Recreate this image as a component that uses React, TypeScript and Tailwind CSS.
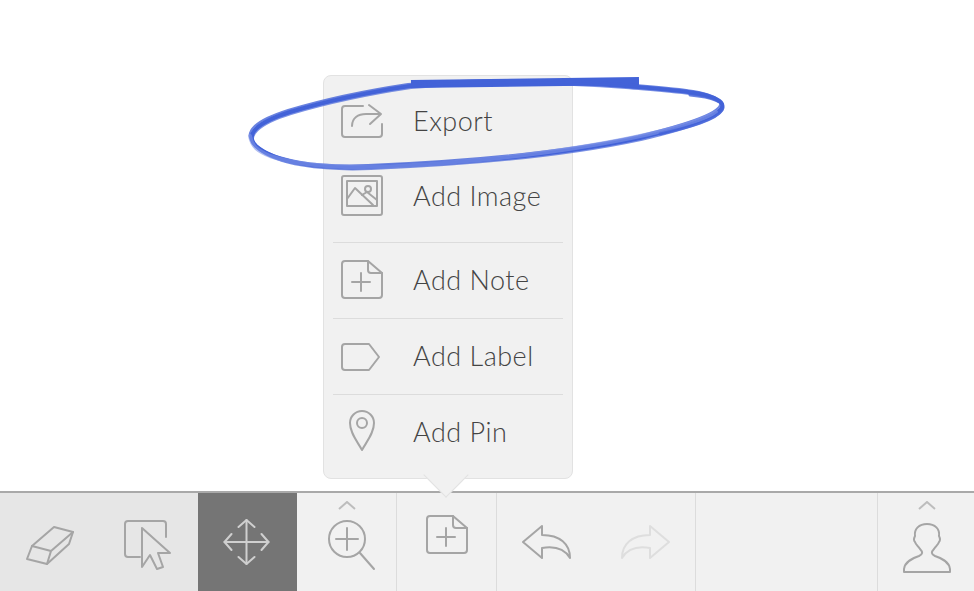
const iconCls = 'fill-none stroke-[#a5a5a5] stroke-2 overflow-visible';

function ExportIcon() {
  return (
    <svg width="44" height="44" viewBox="0 0 44 44" className={iconCls} strokeLinecap="round" strokeLinejoin="round">
      <path d="M23 6H5a3 3 0 0 0-3 3V34a3 3 0 0 0 3 3H39a3 3 0 0 0 3-3V24" />
      <path d="M12 26C12 18 18 14 26 14H40" />
      <path d="M29 5L41 14L30 24" />
    </svg>
  );
}

function ImageIcon() {
  return (
    <svg width="44" height="44" viewBox="0 0 44 44" className={iconCls} strokeLinecap="round" strokeLinejoin="round">
      <rect x="2" y="1" width="40" height="39" rx="2" />
      <rect x="7" y="6" width="30" height="25" />
      <path d="M7 24L15 13L33 30" />
      <path d="M22 20L27 17L37 25" />
      <circle cx="28" cy="14" r="3" />
    </svg>
  );
}

function NoteIcon() {
  return (
    <svg width="44" height="44" viewBox="0 0 44 44" className={iconCls} strokeLinecap="round" strokeLinejoin="round">
      <path d="M28 2H5a3 3 0 0 0-3 3V36a3 3 0 0 0 3 3H39a3 3 0 0 0 3-3V14Z" />
      <path d="M28 2V11a3 3 0 0 0 3 3H42" />
      <path d="M21 14V32M12 23H30" />
    </svg>
  );
}

function LabelIcon() {
  return (
    <svg width="44" height="44" viewBox="0 0 44 44" className={iconCls} strokeLinecap="round" strokeLinejoin="round">
      <path d="M5 9H29L39 22L29 35H5a3 3 0 0 1-3-3V12a3 3 0 0 1 3-3Z" />
    </svg>
  );
}

function PinIcon() {
  return (
    <svg width="44" height="44" viewBox="0 2 44 44" className={iconCls} strokeLinecap="round" strokeLinejoin="round">
      <path d="M22 41C17 32 10 24 10 14a12 12 0 0 1 24 0C34 24 27 32 22 41Z" />
      <circle cx="22" cy="14" r="5" />
    </svg>
  );
}

function EraserIcon() {
  return (
    <svg width="50" height="50" viewBox="1 1 50 50" className={iconCls} strokeLinecap="round" strokeLinejoin="round">
      <path d="M30 11L49 16L45 28L23 48L3 43L8 30Z" />
      <path d="M8 30L27 35L49 16M27 35L23 48" />
    </svg>
  );
}

function SelectIcon() {
  return (
    <svg width="50" height="50" viewBox="0 0 50 50" className={iconCls} strokeLinecap="round" strokeLinejoin="round">
      <path d="M16 40H4a3 3 0 0 1-3-3V7a3 3 0 0 1 3-3H39a3 3 0 0 1 3 3V20" />
      <path d="M18 11V50L26 38L33 52L39 50L34 36H46Z" />
    </svg>
  );
}

function MoveIcon() {
  return (
    <svg width="50" height="50" viewBox="1.5 1 50 50" className="fill-none stroke-[#cfcfcf] stroke-2" strokeLinecap="round" strokeLinejoin="round">
      <path d="M25 4V48M3 26H47" />
      <path d="M17 11L25 4L33 11M17 41L25 48L33 41M10 18L3 26L10 34M40 18L47 26L40 34" />
    </svg>
  );
}

function ZoomIcon() {
  return (
    <svg width="56" height="56" viewBox="0 0 56 56" className={iconCls} strokeLinecap="round" strokeLinejoin="round">
      <circle cx="25" cy="22" r="18" />
      <path d="M38 36L52 52" />
      <path d="M25 11V33M14 22H36" />
    </svg>
  );
}

function UndoIcon({ className }: { className: string }) {
  return (
    <svg width="50" height="34" viewBox="0 0 50 34" className={className} strokeLinecap="round" strokeLinejoin="round">
      <path d="M20 1L1 17L20 33V23C32 21 42 23 48 33C48 19 38 10 20 10Z" />
    </svg>
  );
}

function UserIcon() {
  return (
    <svg width="48" height="50" viewBox="0 0 48 50" className={iconCls} strokeLinecap="round" strokeLinejoin="round">
      <path d="M1 49V46C2 38 10 35 16 33C20 31 20 29 17 26C15 23 13 22 12 19C10 17 11 15 12 13C11 6 16 1 24 1C32 1 37 6 36 13C37 15 38 17 36 19C35 22 33 23 31 26C28 29 28 31 32 33C38 35 46 38 47 46V49Z" />
    </svg>
  );
}

function Caret({ className = '' }: { className?: string }) {
  return (
    <svg width="18" height="9" viewBox="0 0 18 9" className={`absolute top-[8px] left-1/2 -translate-x-1/2 fill-none stroke-[#bdbdbd] stroke-2 ${className}`}>
      <path d="M1 8L9 1L17 8" />
    </svg>
  );
}

function Scribble() {
  const loop = 'M410 86C480 81 560 81 625 86C670 90 716 92 722 104C726 114 690 126 640 138C570 153 470 163 370 167C320 169 275 163 256 146C244 134 258 122 290 112C330 100 370 92 410 86';
  return (
    <svg width="974" height="591" viewBox="0 0 974 591" className="absolute top-0 left-0 z-20 fill-none pointer-events-none" strokeLinecap="round">
      <path d="M411 84L639 81" className="stroke-[#4363d8] stroke-[8px]" style={{ strokeLinecap: 'butt' }} />
      <path d={loop} className="stroke-[#4363d8] stroke-[4px]" />
      <path d={loop} transform="translate(1 2)" className="stroke-[#4363d8] stroke-[2px] opacity-70" />
      <path d={loop} transform="translate(-2 -2)" className="stroke-[#4363d8] stroke-[2px] opacity-80" />
      <path d="M716 112C690 128 600 148 480 160C400 167 320 173 270 156C258 151 252 147 250 136" className="stroke-[#7f95e8] stroke-[4px] opacity-60" />
      <path d="M690 95C712 97 727 102 722 110C716 120 690 127 660 134" className="stroke-[#4363d8] stroke-[3px] opacity-80" />
    </svg>
  );
}

const menu = [
  { label: 'Add Note', icon: <NoteIcon /> },
  { label: 'Add Label', icon: <LabelIcon /> },
  { label: 'Add Pin', icon: <PinIcon /> },
];

function Row({ label, icon }: { label: string; icon: React.ReactNode }) {
  return (
    <div className="h-[75px] flex items-center pl-[7px]">
      <div className="w-[73px] shrink-0">{icon}</div>
      <span className="text-[27px] font-light text-[#444] tracking-[0.5px]">{label}</span>
    </div>
  );
}

export default function App() {
  return (
    <div className="relative w-[974px] h-[591px] overflow-hidden bg-white flex flex-col font-[family-name:Lato,sans-serif]">
      <div className="flex-1 relative">
        <div className="absolute left-[323px] top-[75px] w-[250px] h-[404px] z-10 bg-[#f1f1f1] border border-[#e2e2e2] rounded-lg px-[9px] pt-[8px]">
          <Row label="Export" icon={<ExportIcon />} />
          <Row label="Add Image" icon={<ImageIcon />} />
          <div className="mt-[8px]">
            {menu.map((item) => (
              <div key={item.label} className="border-t border-[#dcdcdc]">
                <Row label={item.label} icon={item.icon} />
              </div>
            ))}
          </div>
          <div className="absolute left-[106px] top-[383px] w-8 h-8 rotate-45 bg-[#f1f1f1] border-r border-b border-[#e2e2e2]" />
        </div>
      </div>

      <div className="h-[100px] shrink-0 flex border-t-2 border-[#a9a9a9] bg-[#f1f1f1]">
        <div className="w-[198px] flex bg-[#e6e6e6]">
          <div className="w-[99px] flex items-center justify-center"><EraserIcon /></div>
          <div className="w-[99px] flex items-center justify-center"><SelectIcon /></div>
        </div>
        <div className="w-[99px] flex items-center justify-center bg-[#757575]"><MoveIcon /></div>
        <div className="relative w-[100px] flex items-center justify-center border-r border-[#dcdcdc] pt-[6px] pl-[6px]">
          <Caret />
          <ZoomIcon />
        </div>
        <div className="w-[100px] flex items-center justify-center border-r border-[#dcdcdc] pb-[12px]">
          <NoteIcon />
        </div>
        <div className="w-[199px] flex items-center justify-between pl-[25px] pr-[25px] border-r border-[#dcdcdc]">
          <UndoIcon className="fill-none stroke-[#a5a5a5] stroke-2" />
          <div className="-scale-x-100"><UndoIcon className="fill-none stroke-[#dedede] stroke-2" /></div>
        </div>
        <div className="w-[182px] border-r border-[#dcdcdc]" />
        <div className="relative flex-1 flex items-center justify-center pt-[12px] pl-[2px]">
          <Caret className="ml-[1px]" />
          <UserIcon />
        </div>
      </div>
      <Scribble />
    </div>
  );
}
